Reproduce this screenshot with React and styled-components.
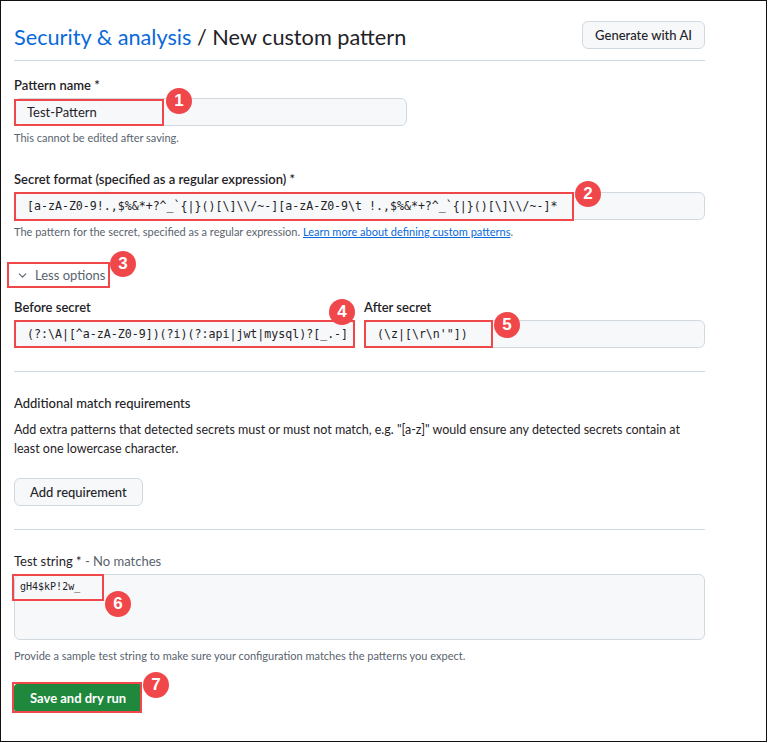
import React from "react"
import styled, { createGlobalStyle } from "styled-components"
import { ChevronDown } from "lucide-react"

const GlobalStyle = createGlobalStyle`
  html, body {
    margin: 0;
    padding: 0;
    background: #ffffff;
  }
  body {
    font-family: Lato, "Liberation Sans", sans-serif;
    color: #1f2328;
  }
`

const Frame = styled.div`
  box-sizing: border-box;
  width: 767px;
  height: 742px;
  border: 1px solid #111;
  padding: 20px 61px 0 13px;
`

const Header = styled.header`
  display: flex;
  justify-content: space-between;
  align-items: flex-start;
  height: 39px;
  border-bottom: 1px solid #d1d9e0;
`

const Title = styled.h1`
  margin: 1px 0 0 0;
  font-size: 21.7px;
  font-weight: 400;
  line-height: 30px;
  color: #1f2328;
`

const Crumb = styled.span`
  color: #0969da;
`

const Button = styled.button`
  box-sizing: border-box;
  height: 28px;
  padding: 0 ${(p) => p.$pad || 12}px;
  border: 1px solid #d1d9e0;
  border-radius: 6px;
  background: #f6f8fa;
  color: #1f2328;
  font-family: inherit;
  font-size: 13px;
  font-weight: 500;
`

const PrimaryButton = styled(Button)`
  background: #1f883d;
  border-color: #1f883d;
  border-radius: 3px;
  color: #ffffff;
  font-weight: 700;
`

const Field = styled.div`
  display: flex;
  flex-direction: column;
  margin-top: ${(p) => p.$top || 0}px;
  width: ${(p) => (p.$width ? `${p.$width}px` : "auto")};
  flex: ${(p) => (p.$grow ? 1 : "none")};
`

const Label = styled.label`
  font-size: 13px;
  line-height: 20px;
  font-weight: ${(p) => p.$weight || 600};
  color: #1f2328;
  margin-bottom: 3px;
`

const Muted = styled.span`
  color: #59636e;
`

const Spot = styled.div`
  position: relative;
  margin-top: ${(p) => p.$top || 0}px;
`

const Input = styled.div`
  box-sizing: border-box;
  height: ${(p) => p.$height || 28}px;
  width: ${(p) => (p.$width ? `${p.$width}px` : "100%")};
  display: flex;
  align-items: ${(p) => (p.$area ? "flex-start" : "center")};
  padding: ${(p) => (p.$area ? "6px 5px" : "0 12px")};
  border: 1px solid #d1d9e0;
  border-radius: 6px;
  background: #f6f8fa;
  font-family: ${(p) =>
    p.$mono ? `"DejaVu Sans Mono", "Liberation Mono", monospace` : "inherit"};
  font-size: ${(p) => (p.$mono ? (p.$area ? 10 : 11.6) : 13)}px;
  color: #1f2328;
  white-space: nowrap;
  overflow: hidden;
`

const Hint = styled.p`
  margin: ${(p) => p.$top || 3}px 0 0 0;
  font-size: 11px;
  line-height: 18px;
  color: #59636e;
`

const Link = styled.a`
  color: #0969da;
  text-decoration: underline;
`

const Toggle = styled.div`
  display: flex;
  align-items: center;
  gap: 6px;
  padding-left: 2px;
  height: 20px;
  font-size: 13px;
  color: #59636e;
`

const Row = styled.div`
  display: flex;
  gap: 9px;
  margin-top: ${(p) => p.$top || 0}px;
`

const Divider = styled.hr`
  margin: ${(p) => p.$top}px 0 0 0;
  border: 0;
  border-top: 1px solid #d1d9e0;
`

const Heading = styled.h3`
  margin: 21px 0 0 0;
  font-size: 13px;
  line-height: 20px;
  font-weight: 500;
`

const Para = styled.p`
  margin: 7px 0 0 0;
  font-size: 12.5px;
  line-height: 19px;
  color: #1f2328;
  white-space: nowrap;
`

const Actions = styled.div`
  margin-top: ${(p) => p.$top}px;
  position: relative;
  width: fit-content;
`

const Mark = styled.div`
  position: absolute;
  box-sizing: border-box;
  border: 2px solid #f0474a;
  left: ${(p) => p.$x}px;
  top: ${(p) => p.$y}px;
  width: ${(p) => p.$w}px;
  height: ${(p) => p.$h}px;
  pointer-events: none;
`

const Badge = styled.div`
  position: absolute;
  left: ${(p) => p.$x - 13}px;
  top: ${(p) => p.$y - 13}px;
  width: 26px;
  height: 26px;
  border-radius: 50%;
  background: #f0474a;
  color: #ffffff;
  display: flex;
  align-items: center;
  justify-content: center;
  font-family: "Liberation Sans", Arial, sans-serif;
  font-size: 17px;
  font-weight: 700;
  z-index: 2;
`

export default function App() {
  return (
    <>
      <GlobalStyle />
      <Frame>
        <Header>
          <Title>
            <Crumb>Security &amp; analysis</Crumb> / New custom pattern
          </Title>
          <Button $pad={12}>Generate with AI</Button>
        </Header>

        <Field $top={14}>
          <Label>Pattern name *</Label>
          <Spot>
            <Input $width={393}>Test-Pattern</Input>
            <Mark $x={0} $y={1} $w={150} $h={27} />
            <Badge $x={165} $y={3}>1</Badge>
          </Spot>
          <Hint>This cannot be edited after saving.</Hint>
        </Field>

        <Field $top={22}>
          <Label>Secret format (specified as a regular expression) *</Label>
          <Spot>
            <Input $mono>
              {"[a-zA-Z0-9!.,$%&*+?^_`{|}()[\\]\\\\/~-][a-zA-Z0-9\\t !.,$%&*+?^_`{|}()[\\]\\\\/~-]*"}
            </Input>
            <Mark $x={0} $y={0} $w={560} $h={29} />
            <Badge $x={574} $y={2}>2</Badge>
          </Spot>
          <Hint>
            The pattern for the secret, specified as a regular expression.{" "}
            <Link>Learn more about defining custom patterns</Link>.
          </Hint>
        </Field>

        <Spot $top={24}>
          <Toggle>
            <ChevronDown size={13} strokeWidth={2} />
            Less options
          </Toggle>
          <Mark $x={-7} $y={-3} $w={103} $h={26} />
          <Badge $x={109} $y={-1}>3</Badge>
        </Spot>

        <Row $top={12}>
          <Field $width={341}>
            <Label>Before secret</Label>
            <Spot>
              <Input $mono>{"(?:\\A|[^a-zA-Z0-9])(?i)(?:api|jwt|mysql)?[_.-]"}</Input>
              <Mark $x={0} $y={0} $w={341} $h={28} />
              <Badge $x={328} $y={-8}>4</Badge>
            </Spot>
          </Field>
          <Field $grow>
            <Label>After secret</Label>
            <Spot>
              <Input $mono>{"(\\z|[\\r\\n'\"])"}</Input>
              <Mark $x={0} $y={0} $w={129} $h={28} />
              <Badge $x={143} $y={5}>5</Badge>
            </Spot>
          </Field>
        </Row>

        <Divider $top={23} />

        <Heading>Additional match requirements</Heading>
        <Para>
          Add extra patterns that detected secrets must or must not match, e.g. "[a-z]" would ensure any detected secrets contain at
          <br />
          least one lowercase character.
        </Para>
        <Actions $top={20}>
          <Button $pad={15}>Add requirement</Button>
        </Actions>

        <Divider $top={23} />

        <Field $top={21}>
          <Label $weight={400}>
            Test string * <Muted>- No matches</Muted>
          </Label>
          <Spot>
            <Input $mono $area $height={66}>gH4$kP!2w_</Input>
            <Mark $x={-2} $y={0} $w={92} $h={27} />
            <Badge $x={104} $y={30}>6</Badge>
          </Spot>
          <Hint $top={7}>Provide a sample test string to make sure your configuration matches the patterns you expect.</Hint>
        </Field>

        <Actions $top={19}>
          <PrimaryButton $pad={15}>Save and dry run</PrimaryButton>
          <Mark $x={-2} $y={-2} $w={130} $h={31} />
          <Badge $x={142} $y={1}>7</Badge>
        </Actions>
      </Frame>
    </>
  )
}
